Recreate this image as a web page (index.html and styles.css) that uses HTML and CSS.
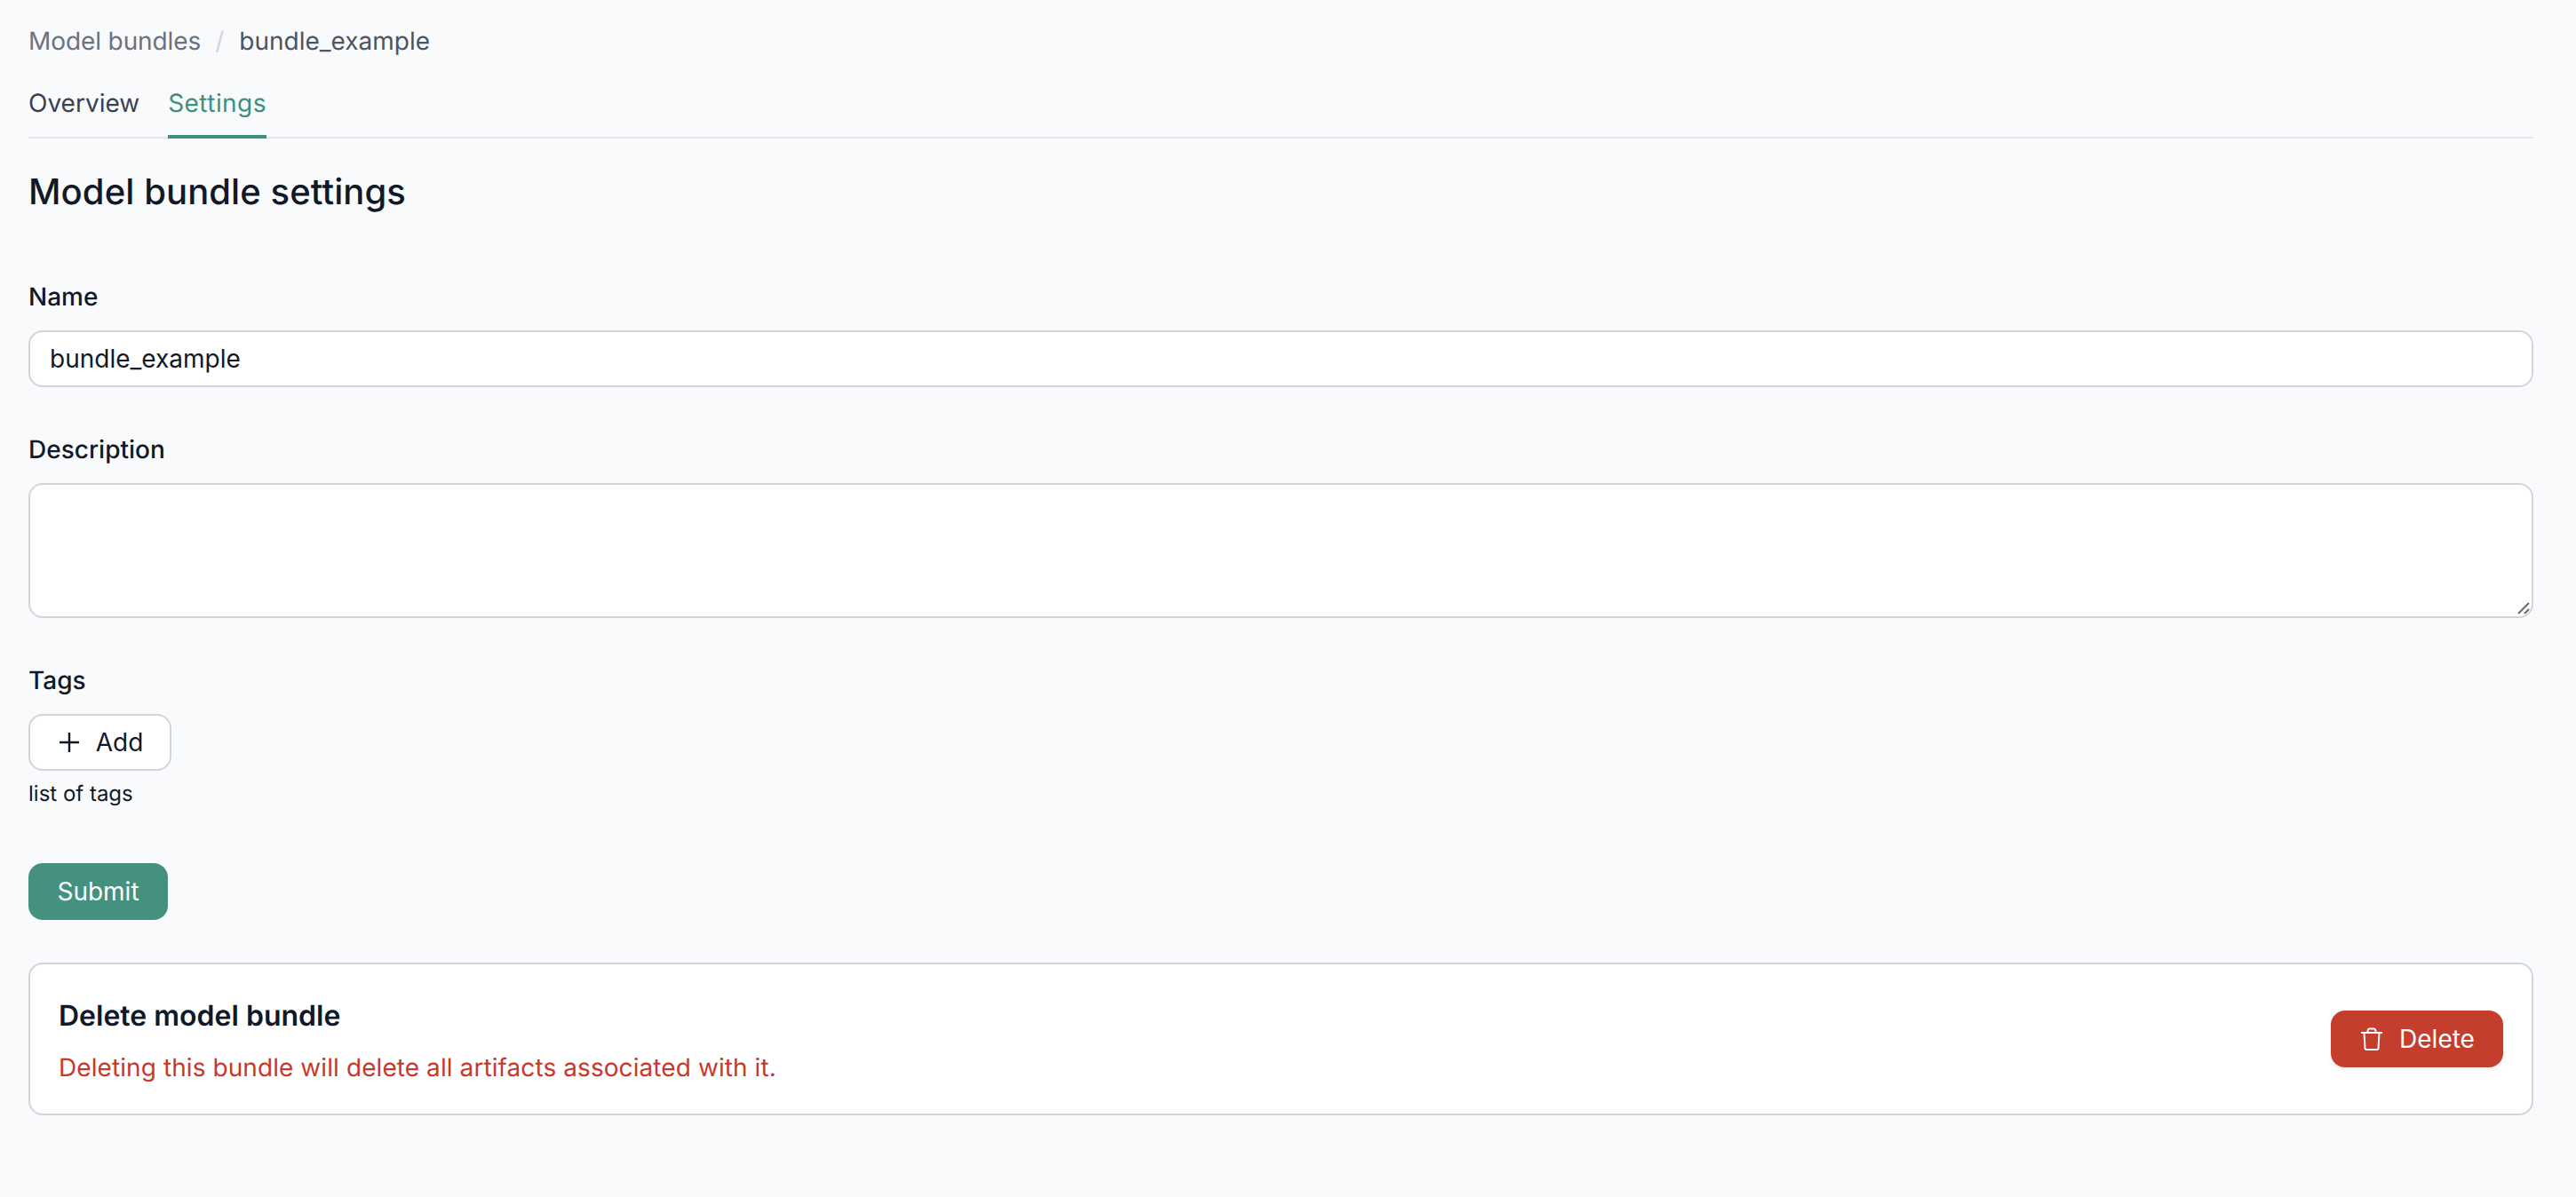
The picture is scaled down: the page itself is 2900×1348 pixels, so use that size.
FILE: index.html
```html
<!DOCTYPE html>
<html lang="en">
<head>
<meta charset="utf-8">
<title>Model bundle settings</title>
<link rel="stylesheet" href="styles.css">
</head>
<body>
<main class="page">
  <nav class="breadcrumb">
    <a class="crumb-link" href="#">Model bundles</a>
    <span class="crumb-sep">/</span>
    <span class="crumb-current">bundle_example</span>
  </nav>
  <div class="tabs">
    <a class="tab" href="#">Overview</a>
    <a class="tab tab-active" href="#">Settings</a>
  </div>
  <h1 class="title">Model bundle settings</h1>
  <form class="form">
    <div class="field">
      <label class="label" for="name">Name</label>
      <input class="input" id="name" type="text" value="bundle_example">
    </div>
    <div class="field field-desc">
      <label class="label" for="desc">Description</label>
      <div class="textarea-wrap">
        <textarea class="textarea" id="desc"></textarea>
        <svg class="grip" width="14" height="14" viewBox="0 0 14 14"><path d="M1 13 13 1M8 13l5-5" stroke="#6b6b6b" stroke-width="2" fill="none"/></svg>
      </div>
    </div>
    <div class="field field-tags">
      <span class="label">Tags</span>
      <button class="btn btn-outline" type="button">
        <svg class="icon" width="24" height="24" viewBox="0 0 24 24"><path d="M12 1v22M1 12h22" stroke="#111827" stroke-width="2.4" fill="none"/></svg>
        Add
      </button>
      <p class="hint">list of tags</p>
    </div>
    <button class="btn btn-primary" type="button">Submit</button>
  </form>
  <section class="danger-card">
    <div>
      <h2 class="danger-title">Delete model bundle</h2>
      <p class="danger-text">Deleting this bundle will delete all artifacts associated with it.</p>
    </div>
    <button class="btn btn-danger" type="button">
      <svg class="icon" width="24" height="26" viewBox="0 0 24 26" fill="none" stroke="#fff" stroke-width="2"><path d="M0 6h24M3.5 6l1 17.5a1.5 1.5 0 0 0 1.5 1.5h12a1.5 1.5 0 0 0 1.500-1.500l1-17.500M7 6l1-3.500a1.500 1.500 0 0 1 1.500-1h5a1.500 1.500 0 0 1 1.500 1l1 3.500"/></svg>
      Delete
    </button>
  </section>
</main>
</body>
</html>
```
FILE: styles.css
```css
* { box-sizing: border-box; }
html, body { margin: 0; height: 100%; }
body {
  background: #f9fafb;
  color: #111827;
  font-family: Inter, "Liberation Sans", sans-serif;
  font-size: 28px;
  line-height: 40px;
  text-rendering: geometricPrecision;
}
.page { padding: 26px 48px 0 32px; }
.breadcrumb { display: flex; align-items: center; height: 40px; }
.crumb-link { color: #6b7280; text-decoration: none; letter-spacing: -0.1px; }
.crumb-sep { color: #d1d5db; margin: 0 17px 0 16px; }
.crumb-current { color: #4b5563; }
.tabs {
  display: flex;
  gap: 32px;
  margin-top: 24px;
  height: 66px;
  border-bottom: 2px solid #e5e7eb;
}
.tab {
  color: #374151;
  text-decoration: none;
  height: 66px;
  padding-top: 6px;
}
.tab-active {
  color: #3f8f7d;
  border-bottom: 4px solid #3f8f7d;
  letter-spacing: 0.45px;
}
.title {
  margin: 36px 0 0;
  font-size: 40px;
  line-height: 48px;
  font-weight: 500;
  letter-spacing: 0.09px;
}
.form { margin-top: 74px; }
.field { display: flex; flex-direction: column; align-items: stretch; }
.field-desc { margin-top: 50px; }
.field-tags { margin-top: 50px; align-items: flex-start; }
.label { font-weight: 500; line-height: 40px; margin-bottom: 18px; }
.input, .textarea {
  display: block;
  width: 100%;
  background: #fff;
  border: 2px solid #d1d5db;
  border-radius: 16px;
  color: #111827;
  font: inherit;
  padding: 0 22px;
  outline: none;
}
.input { height: 64px; }
.textarea-wrap { position: relative; }
.textarea { height: 152px; resize: none; vertical-align: top; }
.grip { position: absolute; right: 4px; bottom: 4px; }
.btn {
  display: inline-flex;
  align-items: center;
  justify-content: center;
  height: 64px;
  border-radius: 16px;
  font: inherit;
  cursor: pointer;
  border: 0;
}
.btn-outline {
  width: 161px;
  padding: 0 0 0 2px;
  background: #fff;
  border: 2px solid #d1d5db;
  color: #111827;
  gap: 18px;
}
.hint {
  margin: 10px 0 0;
  font-size: 24px;
  line-height: 32px;
}
.btn-primary {
  width: 157px;
  margin-top: 62px;
  background: #45917f;
  color: #fff;
}
.danger-card {
  display: flex;
  align-items: center;
  justify-content: space-between;
  margin-top: 48px;
  height: 172px;
  background: #fff;
  border: 2px solid #d1d5db;
  border-radius: 16px;
  padding: 0 32px;
}
.danger-title {
  margin: 6px 0 0;
  font-size: 32px;
  line-height: 40px;
  font-weight: 600;
}
.danger-text { margin: 18px 0 0; color: #c9392b; letter-spacing: 0.08px; }
.btn-danger {
  width: 194px;
  padding: 0 0 0 2px;
  gap: 19px;
  background: #c53e2d;
  color: #fff;
  box-shadow: 0 2px 4px rgba(197, 62, 45, 0.12);
}
```
